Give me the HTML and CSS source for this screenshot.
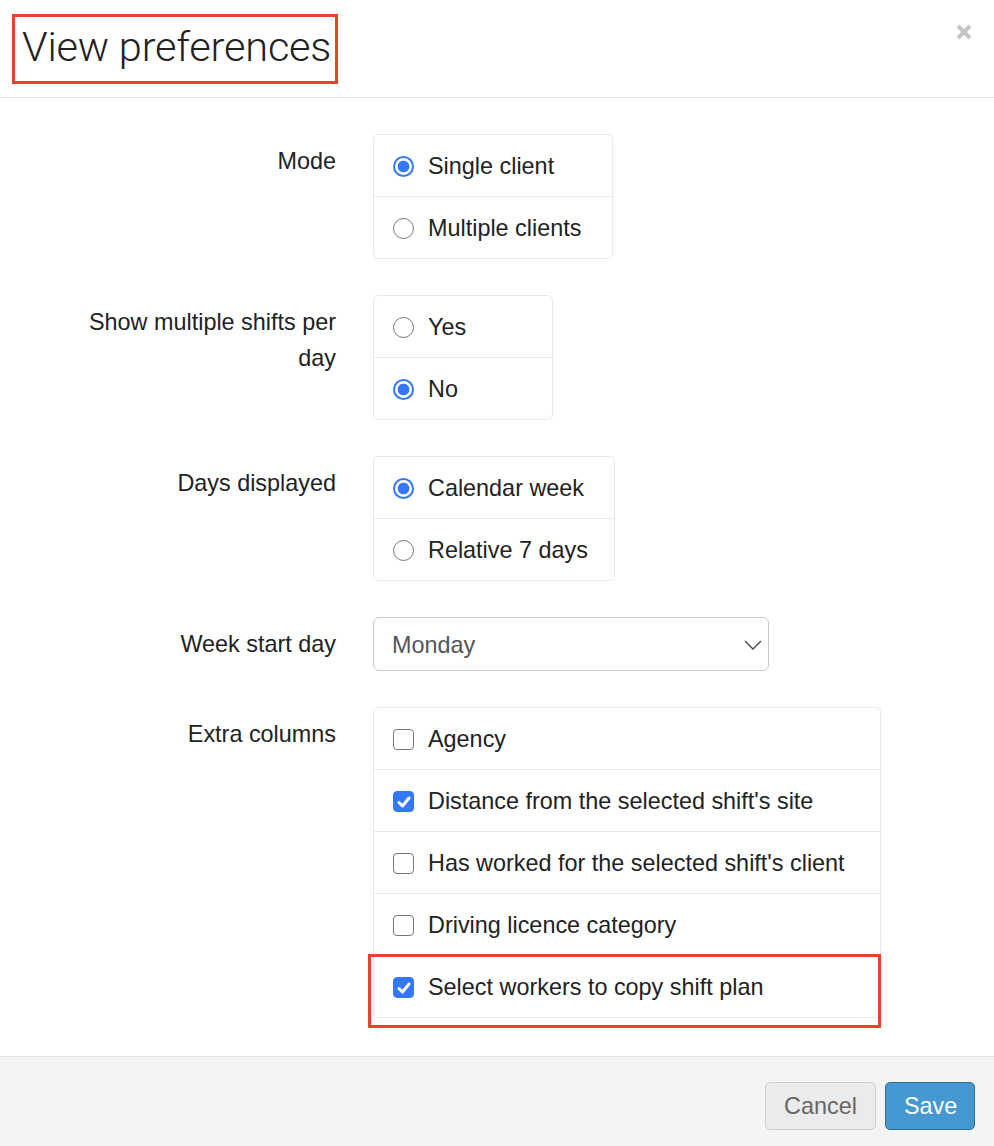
FILE: index.html
```html
<!DOCTYPE html>
<html>
<head>
<meta charset="utf-8">
<link rel="stylesheet" href="styles.css">
</head>
<body>
<div class="modal">
  <div class="modal-header">
    <h1 class="title">View preferences</h1>
    <button class="close" aria-label="Close">
      <svg width="16" height="16" viewBox="0 0 16 16"><path d="M2 2 L14 14 M14 2 L2 14" stroke="#c4c4c4" stroke-width="4" stroke-linecap="butt"/></svg>
    </button>
  </div>
  <div class="modal-body">
    <div class="form-row">
      <div class="label">Mode</div>
      <div class="list w-mode">
        <div class="item"><span class="radio on"></span>Single client</div>
        <div class="item"><span class="radio"></span>Multiple clients</div>
      </div>
    </div>
    <div class="form-row">
      <div class="label">Show multiple shifts per day</div>
      <div class="list w-multi">
        <div class="item"><span class="radio"></span>Yes</div>
        <div class="item"><span class="radio on"></span>No</div>
      </div>
    </div>
    <div class="form-row">
      <div class="label">Days displayed</div>
      <div class="list w-days">
        <div class="item"><span class="radio on"></span>Calendar week</div>
        <div class="item"><span class="radio"></span>Relative 7 days</div>
      </div>
    </div>
    <div class="form-row">
      <div class="label">Week start day</div>
      <div class="select">
        <span>Monday</span>
        <svg width="18" height="10" viewBox="0 0 18 10"><path d="M1 1 L9 9 L17 1" fill="none" stroke="#444" stroke-width="1.4"/></svg>
      </div>
    </div>
    <div class="form-row last">
      <div class="label">Extra columns</div>
      <div class="list w-extra">
        <div class="item"><span class="check"></span>Agency</div>
        <div class="item"><span class="check on"><svg width="14" height="12" viewBox="0 0 14 12"><path d="M2 6.5 L5.5 10 L12 2" fill="none" stroke="#fff" stroke-width="3" stroke-linecap="round" stroke-linejoin="round"/></svg></span>Distance from the selected shift's site</div>
        <div class="item"><span class="check"></span>Has worked for the selected shift's client</div>
        <div class="item"><span class="check"></span>Driving licence category</div>
        <div class="item highlighted"><span class="check on"><svg width="14" height="12" viewBox="0 0 14 12"><path d="M2 6.5 L5.5 10 L12 2" fill="none" stroke="#fff" stroke-width="3" stroke-linecap="round" stroke-linejoin="round"/></svg></span>Select workers to copy shift plan<span class="annot"></span></div>
      </div>
    </div>
  </div>
  <div class="modal-footer">
    <button class="btn btn-default">Cancel</button>
    <button class="btn btn-primary">Save</button>
  </div>
</div>
</body>
</html>
```

FILE: styles.css
```css
* { box-sizing: border-box; }
html, body { margin: 0; padding: 0; background: #fff; }
body {
  font-family: "Liberation Sans", Arial, sans-serif;
  font-size: 23.4px;
  color: #222;
}
.modal { width: 994px; min-height: 1146px; display: flex; flex-direction: column; }
.modal-header {
  display: flex;
  align-items: flex-start;
  justify-content: space-between;
  padding: 14px 12px 13px 12px;
  border-bottom: 1px solid #e5e5e5;
}
.title {
  margin: 0;
  height: 70px;
  width: 326px;
  border: 3px solid #e5432a;
  padding: 0 0 0 7px;
  font-family: Roboto, "Liberation Sans", sans-serif;
  font-weight: 300;
  font-size: 41.5px;
  line-height: 60px;
  color: #222;
  letter-spacing: -0.2px;
}
.close {
  border: 0;
  background: none;
  padding: 0;
  margin: 10px 10px 0 0;
  width: 16px;
  height: 16px;
  display: flex;
}
.modal-body { padding: 36px 0 37px 0; flex: 1; }
.form-row {
  display: grid;
  grid-template-columns: 336px auto;
  column-gap: 37px;
  justify-content: start;
  align-items: start;
  margin-bottom: 36px;
}
.form-row.last { margin-bottom: 0; }
.label {
  text-align: right;
  line-height: 36px;
  padding-top: 9px;
  padding-left: 60px;
  color: #222;
}
.list {
  border: 1px solid #e9e9e9;
  border-radius: 5px;
  display: flex;
  flex-direction: column;
}
.w-mode { width: 240px; }
.w-multi { width: 180px; }
.w-days { width: 242px; }
.w-extra { width: 508px; }
.item {
  position: relative;
  height: 62px;
  display: flex;
  align-items: center;
  padding-left: 19px;
  padding-top: 2px;
  border-top: 1px solid #e9e9e9;
  white-space: nowrap;
  color: #222;
}
.item:first-child { border-top: 0; height: 61px; }
.radio {
  width: 21px;
  height: 21px;
  border-radius: 50%;
  border: 1.5px solid #767676;
  margin-right: 14px;
  flex: none;
  background: #fff;
}
.radio.on {
  border: 2px solid #3478f6;
  background: radial-gradient(circle, #3478f6 0 5.5px, #fff 6.2px);
}
.check {
  width: 21px;
  height: 21px;
  border-radius: 4px;
  border: 1.5px solid #767676;
  margin-right: 14px;
  flex: none;
  display: flex;
  align-items: center;
  justify-content: center;
}
.check.on { background: #3478f6; border-color: #3478f6; }
.annot {
  position: absolute;
  left: -6px;
  right: -1px;
  top: -2px;
  bottom: -11px;
  border: 3px solid #e5432a;
  pointer-events: none;
}
.select {
  width: 396px;
  height: 54px;
  border: 1px solid #c8c8c8;
  border-radius: 6px;
  display: flex;
  align-items: center;
  justify-content: space-between;
  padding: 2px 6px 0 18px;
  color: #555;
}
.modal-footer {
  border-top: 1px solid #e3e3e3;
  background: #f4f4f4;
  display: flex;
  justify-content: flex-end;
  gap: 9px;
  padding: 25px 19px 16px 0;
}
.btn {
  font-family: "Liberation Sans", Arial, sans-serif;
  font-size: 23.4px;
  height: 48px;
  border-radius: 5px;
  padding: 0 18px;
  cursor: pointer;
}
.btn-default { width: 111px; background: #ebebeb; border: 1px solid #cfcfcf; color: #666; }
.btn-primary { width: 90px; background: #4599d0; border: 1px solid #2e6d8e; color: #fff; }
```
